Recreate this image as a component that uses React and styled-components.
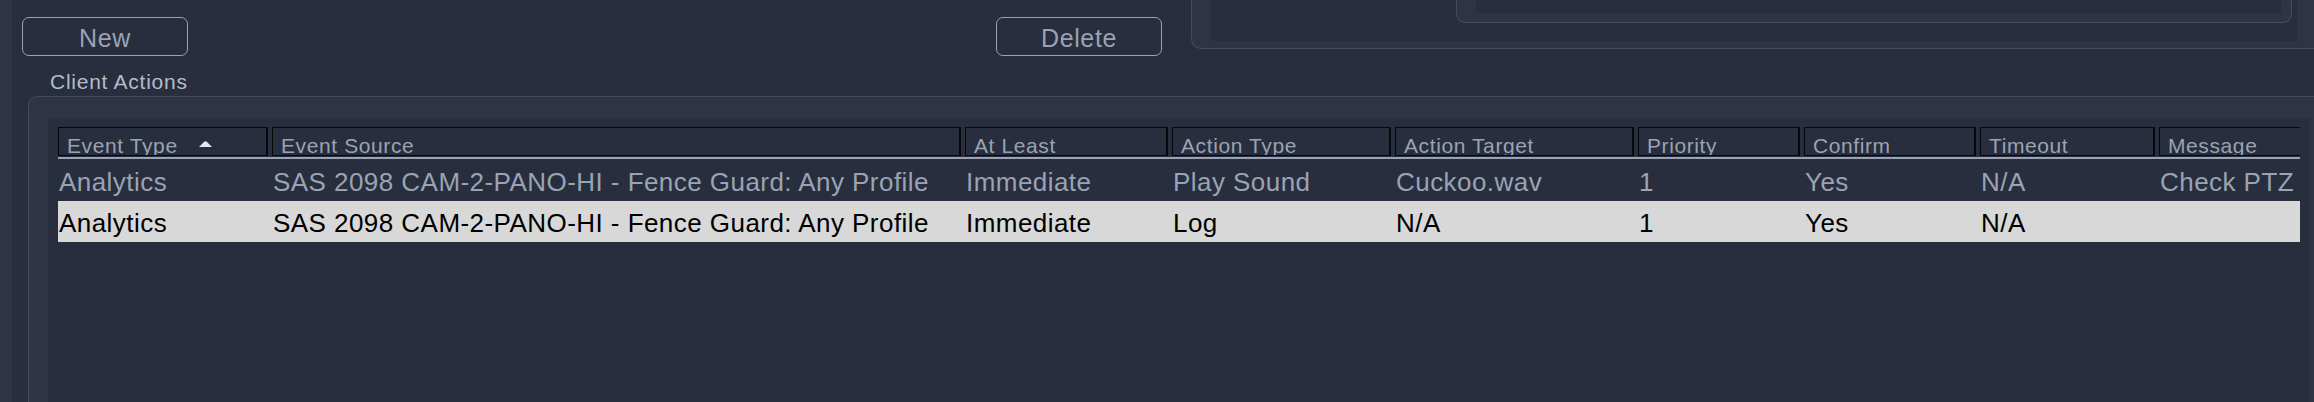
import React from "react";
import styled, { createGlobalStyle } from "styled-components";

const GlobalStyle = createGlobalStyle`
  html, body {
    margin: 0;
    padding: 0;
    background: #2e3443;
    overflow: hidden;
  }
  * {
    box-sizing: border-box;
  }
`;

const COLUMNS = [214, 693, 207, 223, 243, 166, 176, 179, 141];

const HEADERS = [
  "Event Type",
  "Event Source",
  "At Least",
  "Action Type",
  "Action Target",
  "Priority",
  "Confirm",
  "Timeout",
  "Message",
];

const ROWS = [
  [
    "Analytics",
    "SAS 2098 CAM-2-PANO-HI - Fence Guard: Any Profile",
    "Immediate",
    "Play Sound",
    "Cuckoo.wav",
    "1",
    "Yes",
    "N/A",
    "Check PTZ",
  ],
  [
    "Analytics",
    "SAS 2098 CAM-2-PANO-HI - Fence Guard: Any Profile",
    "Immediate",
    "Log",
    "N/A",
    "1",
    "Yes",
    "N/A",
    "",
  ],
];

const Screen = styled.div`
  display: flex;
  width: 2314px;
  height: 402px;
  background: #2e3443;
  font-family: "Liberation Sans", Arial, sans-serif;
`;

const Main = styled.div`
  flex: 1;
  margin-left: 12px;
  display: flex;
  flex-direction: column;
  background: #282e3d;
  overflow: hidden;
`;

const TopBar = styled.div`
  display: flex;
  align-items: flex-start;
  height: 60px;
  padding-left: 10px;
`;

const ButtonBar = styled.div`
  display: flex;
  justify-content: space-between;
  width: 1140px;
  padding-top: 17px;
`;

const Button = styled.button`
  width: 166px;
  height: 39px;
  border: 1.5px solid #9aa3b4;
  border-radius: 7px;
  background: transparent;
  color: #9aa3b4;
  font-family: inherit;
  font-size: 25px;
  letter-spacing: 0.6px;
  line-height: 1;
  padding: 4px 0 0;
`;

const OuterPanel = styled.div`
  flex: 1;
  height: 49px;
  margin-left: 29px;
  padding: 0 17px 7px 19px;
  background: #2e3443;
  border-left: 1.5px solid #464c5c;
  border-bottom: 1.5px solid #464c5c;
  border-bottom-left-radius: 10px;
`;

const OuterWell = styled.div`
  height: 100%;
  padding: 0 5px 0 245px;
  background: #282e3d;
`;

const InnerPanel = styled.div`
  height: 23px;
  padding: 0 10px 9px 19px;
  background: #2e3443;
  border: 1.5px solid #464c5c;
  border-top: none;
  border-radius: 0 0 9px 9px;
`;

const InnerWell = styled.div`
  height: 100%;
  background: #282e3d;
`;

const GroupLabel = styled.div`
  height: 36px;
  padding: 10px 0 0 38px;
  color: #b5bcc9;
  font-size: 21px;
  line-height: 24px;
  letter-spacing: 0.75px;
`;

const GroupBox = styled.div`
  flex: 1;
  display: flex;
  margin-left: 16px;
  padding: 21px 4px 0 19px;
  background: #2e3443;
  border-left: 1.5px solid #464c5c;
  border-top: 1.5px solid #464c5c;
  border-top-left-radius: 9px;
`;

const TableWell = styled.div`
  flex: 1;
  padding: 9px 10px 0 10px;
  background: #282e3d;
`;

const HeaderRow = styled.div`
  display: grid;
  grid-template-columns: ${COLUMNS.map((w) => `${w}px`).join(" ")};
  padding-bottom: 1px;
  border-bottom: 2px solid #9aa3b4;
`;

const HeadWrap = styled.div`
  position: relative;
`;

const HeadCell = styled.div`
  position: relative;
  height: 29px;
  margin-right: ${(p) => (p.$last ? "0" : "4px")};
  padding: 7px 0 0 8px;
  border: 1px solid #06080c;
  border-right: ${(p) => (p.$last ? "none" : "2px solid #06080c")};
  color: #9aa3b4;
  font-size: 21px;
  line-height: 21px;
  letter-spacing: 0.6px;
  white-space: nowrap;
  overflow: hidden;

  &::after {
    content: "";
    display: ${(p) => (p.$last ? "none" : "block")};
    position: absolute;
    top: -1px;
    right: -4px;
    width: 1.5px;
    height: 33px;
    background: #9aa3b4;
  }
`;

const SortArrow = styled.svg`
  margin-left: 21px;
  vertical-align: 6px;
`;

const DataRow = styled.div`
  display: grid;
  grid-template-columns: ${COLUMNS.map((w) => `${w}px`).join(" ")};
  height: 41px;
  margin-top: ${(p) => (p.$first ? "1px" : "0")};
  background: ${(p) => (p.$selected ? "#d8d8d8" : "transparent")};
  color: ${(p) => (p.$selected ? "#000000" : "#9aa3b4")};
`;

const Cell = styled.div`
  padding: 4px 0 0 1px;
  font-size: 26px;
  line-height: 37px;
  letter-spacing: 0.45px;
  white-space: nowrap;
  overflow: hidden;
`;

const App = () => {
  return (
    <>
      <GlobalStyle />
      <Screen>
        <Main>
          <TopBar>
            <ButtonBar>
              <Button>New</Button>
              <Button>Delete</Button>
            </ButtonBar>
            <OuterPanel>
              <OuterWell>
                <InnerPanel>
                  <InnerWell />
                </InnerPanel>
              </OuterWell>
            </OuterPanel>
          </TopBar>
          <GroupLabel>Client Actions</GroupLabel>
          <GroupBox>
            <TableWell>
              <HeaderRow>
                {HEADERS.map((h, i) => (
                  <HeadWrap key={h}>
                    <HeadCell $last={i === HEADERS.length - 1}>
                      {h}
                      {i === 0 && (
                        <SortArrow width="13" height="6" viewBox="0 0 13 6">
                          <path d="M0 6 L5.2 0.8 Q6.5 -0.3 7.8 0.8 L13 6 Z" fill="#e4e7ee" />
                        </SortArrow>
                      )}
                    </HeadCell>
                  </HeadWrap>
                ))}
              </HeaderRow>
              {ROWS.map((row, r) => (
                <DataRow key={r} $first={r === 0} $selected={r === 1}>
                  {row.map((v, c) => (
                    <Cell key={c}>{v}</Cell>
                  ))}
                </DataRow>
              ))}
            </TableWell>
          </GroupBox>
        </Main>
      </Screen>
    </>
  );
};

export default App;
